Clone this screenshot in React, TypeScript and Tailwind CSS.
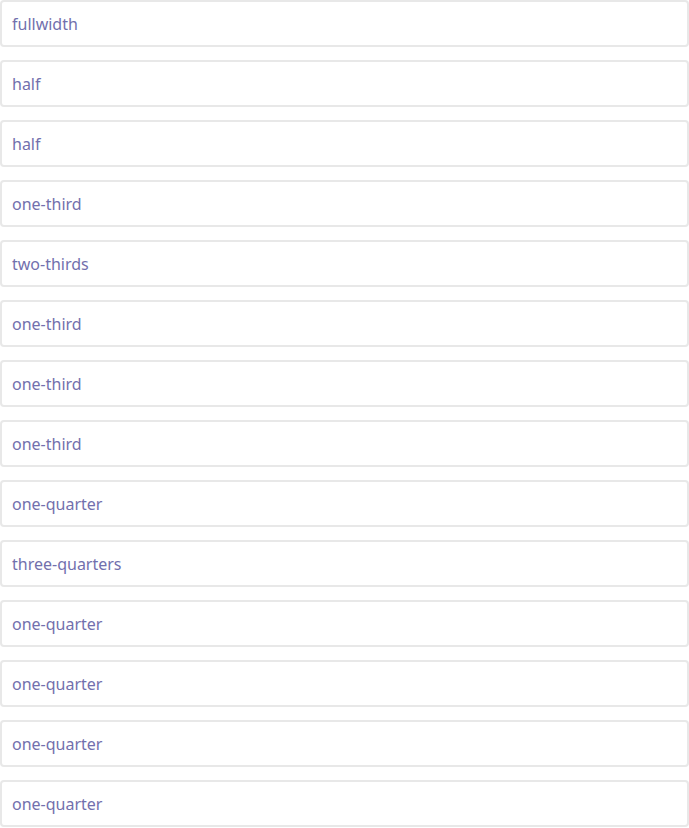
const items = [
  "fullwidth",
  "half",
  "half",
  "one-third",
  "two-thirds",
  "one-third",
  "one-third",
  "one-third",
  "one-quarter",
  "three-quarters",
  "one-quarter",
  "one-quarter",
  "one-quarter",
  "one-quarter",
];

const App = () => {
  return (
    <div className="flex flex-col gap-[13px] bg-white font-['Noto_Sans',sans-serif]">
      {items.map((label, i) => (
        <div
          key={i}
          className="h-[47px] w-full rounded-[4px] border-2 border-[#e8e8e8] px-[10px] flex items-center text-[16px] text-[#7270ad]"
        >
          {label}
        </div>
      ))}
    </div>
  );
};

export default App;
